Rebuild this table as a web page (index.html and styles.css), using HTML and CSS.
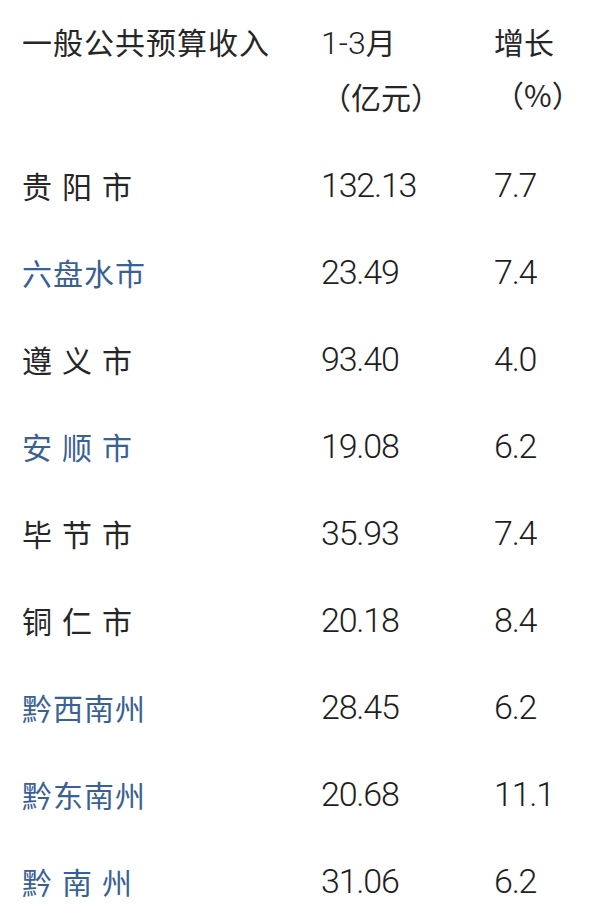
FILE: index.html
```html
<!DOCTYPE html>
<html lang="zh-CN">
<head>
<meta charset="utf-8">
<title>一般公共预算收入</title>
<link rel="stylesheet" href="styles.css">
</head>
<body>
<div class="table">
  <div class="head">
    <div class="cell name">一般公共预算收入</div>
    <div class="cell num"><span class="n">1-3</span>月<br>（亿元）</div>
    <div class="cell pct">增长<br>（%）</div>
  </div>
  <div class="row">
    <div class="cell name wide">贵阳市</div>
    <div class="cell num n">132.13</div>
    <div class="cell pct n">7.7</div>
  </div>
  <div class="row">
    <div class="cell name blue">六盘水市</div>
    <div class="cell num n">23.49</div>
    <div class="cell pct n">7.4</div>
  </div>
  <div class="row">
    <div class="cell name wide">遵义市</div>
    <div class="cell num n">93.40</div>
    <div class="cell pct n">4.0</div>
  </div>
  <div class="row">
    <div class="cell name wide blue">安顺市</div>
    <div class="cell num n">19.08</div>
    <div class="cell pct n">6.2</div>
  </div>
  <div class="row">
    <div class="cell name wide">毕节市</div>
    <div class="cell num n">35.93</div>
    <div class="cell pct n">7.4</div>
  </div>
  <div class="row">
    <div class="cell name wide">铜仁市</div>
    <div class="cell num n">20.18</div>
    <div class="cell pct n">8.4</div>
  </div>
  <div class="row">
    <div class="cell name blue">黔西南州</div>
    <div class="cell num n">28.45</div>
    <div class="cell pct n">6.2</div>
  </div>
  <div class="row">
    <div class="cell name blue">黔东南州</div>
    <div class="cell num n">20.68</div>
    <div class="cell pct n">11.1</div>
  </div>
  <div class="row">
    <div class="cell name wide blue">黔南州</div>
    <div class="cell num n">31.06</div>
    <div class="cell pct n">6.2</div>
  </div>
</div>
</body>
</html>
```
FILE: styles.css
```css
html, body {
  margin: 0;
  padding: 0;
  background: #ffffff;
}
body {
  font-family: "Noto Sans CJK SC", "Noto Sans", sans-serif;
  color: #262626;
  font-size: 30px;
}
.table {
  padding: 15px 0 0 22px;
}
.head, .row {
  display: grid;
  grid-template-columns: 299px 173px 1fr;
}
.head {
  line-height: 53px;
  margin-bottom: 18px;
}
.row {
  height: 87px;
  align-items: center;
  line-height: 40px;
}
.name {
  letter-spacing: 1px;
}
.name.wide {
  letter-spacing: 10px;
}
.blue {
  color: #3a6194;
}
.n {
  font-family: Roboto, "Noto Sans", sans-serif;
  font-weight: 300;
  font-size: 34px;
  letter-spacing: -1.2px;
  color: #1e1e1e;
}
.head .n {
  font-size: 32px;
  letter-spacing: 0;
}
```
